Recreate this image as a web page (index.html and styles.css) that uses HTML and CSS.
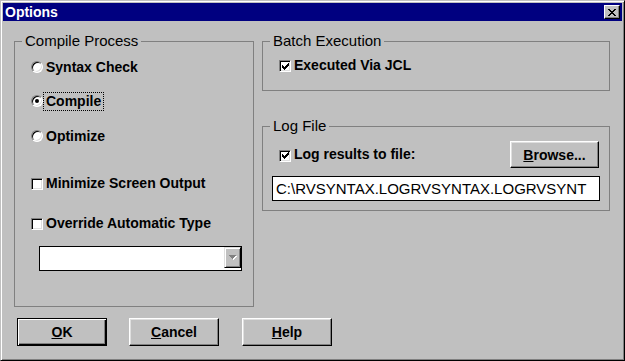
FILE: index.html
```html
<!DOCTYPE html>
<html>
<head>
<meta charset="utf-8">
<title>Options</title>
<link rel="stylesheet" href="styles.css">
</head>
<body>
<div class="window">
  <div class="titlebar">
    <span class="title">Options</span>
    <div class="close">
      <svg width="8" height="7" viewBox="0 0 8 7" shape-rendering="crispEdges"><path fill="#000" d="M0 0h2v1h-2zM6 0h2v1h-2zM1 1h2v1h-2zM5 1h2v1h-2zM2 2h4v1h-4zM3 3h2v1h-2zM2 4h4v1h-4zM1 5h2v1h-2zM5 5h2v1h-2zM0 6h2v1h-2zM6 6h2v1h-2z"/></svg>
    </div>
  </div>
  <div class="client">
    <div class="top">
      <div class="group group-compile">
        <div class="legend">Compile Process</div>
        <div class="opt opt-1"><span class="radio"></span><span class="label">Syntax Check</span></div>
        <div class="opt opt-2"><span class="radio checked"></span><span class="label focus">Compile</span></div>
        <div class="opt opt-3"><span class="radio"></span><span class="label">Optimize</span></div>
        <div class="opt opt-4"><span class="check"></span><span class="label">Minimize Screen Output</span></div>
        <div class="opt opt-5"><span class="check"></span><span class="label">Override Automatic Type</span></div>
        <div class="combo">
          <div class="combo-btn">
            <svg width="8" height="5" viewBox="0 0 8 5" shape-rendering="crispEdges"><path fill="#fff" d="M1 1h7v1h-7zM2 2h5v1h-5zM3 3h3v1h-3zM4 4h1v1h-1z"/><path fill="#808080" d="M0 0h7v1h-7zM1 1h5v1h-5zM2 2h3v1h-3zM3 3h1v1h-1z"/></svg>
          </div>
        </div>
      </div>
      <div class="right">
        <div class="group group-batch">
          <div class="legend">Batch Execution</div>
          <div class="opt opt-batch"><span class="check">
            <svg width="7" height="7" viewBox="0 0 7 7" shape-rendering="crispEdges"><path fill="#000" d="M6 0h1v1h-1zM5 1h2v1h-2zM0 2h1v1h-1zM4 2h3v1h-3zM0 3h2v1h-2zM3 3h3v1h-3zM0 4h5v1h-5zM1 5h3v1h-3zM2 6h1v1h-1z"/></svg>
          </span><span class="label">Executed Via JCL</span></div>
        </div>
        <div class="group group-log">
          <div class="legend">Log File</div>
          <div class="logrow">
            <div class="opt opt-log"><span class="check">
              <svg width="7" height="7" viewBox="0 0 7 7" shape-rendering="crispEdges"><path fill="#000" d="M6 0h1v1h-1zM5 1h2v1h-2zM0 2h1v1h-1zM4 2h3v1h-3zM0 3h2v1h-2zM3 3h3v1h-3zM0 4h5v1h-5zM1 5h3v1h-3zM2 6h1v1h-1z"/></svg>
            </span><span class="label">Log results to file:</span></div>
            <button class="btn btn-browse"><span><u>B</u>rowse...</span></button>
          </div>
          <div class="textfield">C:\RVSYNTAX.LOGRVSYNTAX.LOGRVSYNT</div>
        </div>
      </div>
    </div>
    <div class="buttons">
      <button class="btn btn-default"><span><u>O</u>K</span></button>
      <button class="btn"><span><u>C</u>ancel</span></button>
      <button class="btn btn-help"><span><u>H</u>elp</span></button>
    </div>
  </div>
</div>
</body>
</html>
```

FILE: styles.css
```css
html, body {
  margin: 0;
  padding: 0;
  background: #c0c0c0;
}

body {
  font-family: "Liberation Sans", Arial, sans-serif;
  color: #000;
}

.window {
  width: 625px;
  height: 361px;
  box-sizing: border-box;
  border: 1px solid;
  border-color: #c0c0c0 #000 #000 #c0c0c0;
  box-shadow: inset 1px 1px #fff, inset -1px -1px #808080;
  padding: 2px;
  background: #c0c0c0;
  display: flex;
  flex-direction: column;
}

.titlebar {
  height: 18px;
  background: #000080;
  display: flex;
  align-items: center;
  justify-content: space-between;
  padding: 0 2px;
  flex-shrink: 0;
}

.title {
  color: #fff;
  font-weight: bold;
  font-size: 14px;
  line-height: 18px;
}

.close {
  width: 16px;
  height: 14px;
  box-sizing: border-box;
  background: #c0c0c0;
  border: 1px solid;
  border-color: #fff #000 #000 #fff;
  box-shadow: inset -1px -1px #808080;
  display: flex;
  align-items: center;
  justify-content: center;
}

.close svg {
  display: block;
}

.client {
  flex: 1;
  padding: 20px 12px 0 11px;
  display: flex;
  flex-direction: column;
}

.top {
  display: flex;
  gap: 8px;
}

.group {
  border: 1px solid #808080;
  display: flex;
  flex-direction: column;
  box-sizing: border-box;
}

.group-compile {
  width: 240px;
  height: 266px;
}

.right {
  width: 348px;
  display: flex;
  flex-direction: column;
}

.group-batch {
  height: 50px;
}

.group-log {
  height: 85px;
  margin-top: 35px;
}

.legend {
  align-self: flex-start;
  margin: -10px 0 0 7px;
  padding: 0 3px;
  background: #c0c0c0;
  font-size: 15px;
  line-height: 17px;
}

.opt {
  display: flex;
  align-items: center;
  height: 20px;
  padding-left: 16px;
}

.opt-1 { margin-top: 8px; }
.opt-2 { margin-top: 14px; }
.opt-3 { margin-top: 15px; }
.opt-4 { margin-top: 27px; }
.opt-5 { margin-top: 20px; }
.opt-batch { margin-top: 6px; }
.opt-log { padding-left: 0; }

.label {
  font-weight: bold;
  font-size: 14px;
  line-height: 17px;
  padding: 0 2px;
  border: 1px dotted transparent;
  white-space: nowrap;
}

.label.focus {
  border-color: #000;
}

.radio {
  width: 12px;
  height: 12px;
  box-sizing: border-box;
  border-radius: 50%;
  background: #fff;
  border: 1px solid;
  border-color: #808080 #fff #fff #808080;
  box-shadow: inset 1px 1px #000, inset -1px -1px #dfdfdf;
  display: flex;
  align-items: center;
  justify-content: center;
  flex-shrink: 0;
}

.radio.checked::after {
  content: "";
  width: 4px;
  height: 4px;
  border-radius: 50%;
  background: #000;
}

.check {
  width: 12px;
  height: 12px;
  box-sizing: border-box;
  background: #fff;
  border: 1px solid;
  border-color: #808080 #fff #fff #808080;
  box-shadow: inset 1px 1px #000, inset -1px -1px #dfdfdf;
  display: flex;
  align-items: center;
  justify-content: center;
  flex-shrink: 0;
  margin-top: 2px;
}

.check svg {
  display: block;
}

.combo {
  margin: 13px 0 0 24px;
  width: 203px;
  height: 25px;
  box-sizing: border-box;
  border: 1px solid #000;
  background: #fff;
  display: flex;
  justify-content: flex-end;
  align-items: flex-start;
}

.combo-btn {
  width: 17px;
  height: 21px;
  box-sizing: border-box;
  background: #c0c0c0;
  border: 1px solid;
  border-color: #dfdfdf #000 #000 #dfdfdf;
  box-shadow: inset 1px 1px #fff, inset -1px -1px #808080;
  display: flex;
  align-items: center;
  justify-content: center;
}

.combo-btn svg {
  display: block;
}

.logrow {
  display: flex;
  align-items: center;
  justify-content: space-between;
  margin-top: 7px;
  padding: 0 10px 0 16px;
}

.textfield {
  margin: 8px 9px 0 9px;
  height: 25px;
  box-sizing: border-box;
  border: 1px solid #000;
  background: #fff;
  padding-left: 3px;
  font-size: 15px;
  line-height: 23px;
  white-space: nowrap;
  overflow: hidden;
}

.buttons {
  display: flex;
  gap: 22px;
  margin-top: 11px;
  padding-left: 3px;
}

.btn {
  width: 90px;
  height: 28px;
  margin: 0;
  padding: 0;
  box-sizing: border-box;
  border: 1px solid;
  border-color: #fff #000 #000 #fff;
  box-shadow: inset -1px -1px #808080, inset 1px 1px #dfdfdf;
  background: #c0c0c0;
  display: flex;
  align-items: center;
  justify-content: center;
  font-family: inherit;
  font-weight: bold;
  font-size: 14px;
  color: #000;
}

.btn-default {
  border-color: #000;
  box-shadow: inset 1px 1px #fff, inset -1px -1px #000, inset -2px -2px #808080;
}

.btn-help {
  margin-left: 1px;
}

.btn-browse {
  width: 89px;
  height: 27px;
}
```
